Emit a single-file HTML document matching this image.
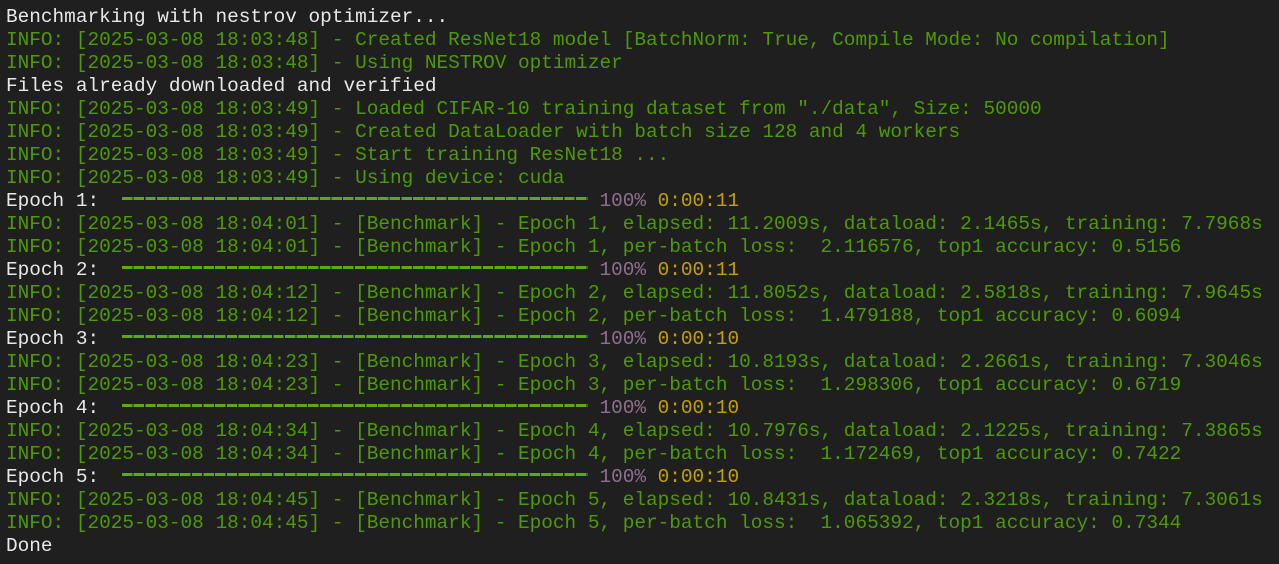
<html><head><style>
body{margin:0;background:#1f1f1f;width:1279px;height:564px;overflow:hidden}
pre{margin:0;padding:6px 0 0 6px;font-family:"Liberation Mono",monospace;font-size:19.4px;line-height:23px;color:#e8e8e8;white-space:pre}
.g{color:#4e9a06}
.b{display:inline-block;width:40ch;height:3px;background:repeating-linear-gradient(90deg,#5ea90f 0 10.4px,transparent 10.4px 11.64px);vertical-align:middle;position:relative;top:-2px}
.p{color:#8f6f8f}.t{color:#c4a000}
</style></head><body><pre>Benchmarking with nestrov optimizer...
<span class="g">INFO: [2025-03-08 18:03:48] - Created ResNet18 model [BatchNorm: True, Compile Mode: No compilation]</span>
<span class="g">INFO: [2025-03-08 18:03:48] - Using NESTROV optimizer</span>
Files already downloaded and verified
<span class="g">INFO: [2025-03-08 18:03:49] - Loaded CIFAR-10 training dataset from "./data", Size: 50000</span>
<span class="g">INFO: [2025-03-08 18:03:49] - Created DataLoader with batch size 128 and 4 workers</span>
<span class="g">INFO: [2025-03-08 18:03:49] - Start training ResNet18 ...</span>
<span class="g">INFO: [2025-03-08 18:03:49] - Using device: cuda</span>
Epoch 1:  <span class="b"></span> <span class="p">100%</span> <span class="t">0:00:11</span>
<span class="g">INFO: [2025-03-08 18:04:01] - [Benchmark] - Epoch 1, elapsed: 11.2009s, dataload: 2.1465s, training: 7.7968s</span>
<span class="g">INFO: [2025-03-08 18:04:01] - [Benchmark] - Epoch 1, per-batch loss:  2.116576, top1 accuracy: 0.5156</span>
Epoch 2:  <span class="b"></span> <span class="p">100%</span> <span class="t">0:00:11</span>
<span class="g">INFO: [2025-03-08 18:04:12] - [Benchmark] - Epoch 2, elapsed: 11.8052s, dataload: 2.5818s, training: 7.9645s</span>
<span class="g">INFO: [2025-03-08 18:04:12] - [Benchmark] - Epoch 2, per-batch loss:  1.479188, top1 accuracy: 0.6094</span>
Epoch 3:  <span class="b"></span> <span class="p">100%</span> <span class="t">0:00:10</span>
<span class="g">INFO: [2025-03-08 18:04:23] - [Benchmark] - Epoch 3, elapsed: 10.8193s, dataload: 2.2661s, training: 7.3046s</span>
<span class="g">INFO: [2025-03-08 18:04:23] - [Benchmark] - Epoch 3, per-batch loss:  1.298306, top1 accuracy: 0.6719</span>
Epoch 4:  <span class="b"></span> <span class="p">100%</span> <span class="t">0:00:10</span>
<span class="g">INFO: [2025-03-08 18:04:34] - [Benchmark] - Epoch 4, elapsed: 10.7976s, dataload: 2.1225s, training: 7.3865s</span>
<span class="g">INFO: [2025-03-08 18:04:34] - [Benchmark] - Epoch 4, per-batch loss:  1.172469, top1 accuracy: 0.7422</span>
Epoch 5:  <span class="b"></span> <span class="p">100%</span> <span class="t">0:00:10</span>
<span class="g">INFO: [2025-03-08 18:04:45] - [Benchmark] - Epoch 5, elapsed: 10.8431s, dataload: 2.3218s, training: 7.3061s</span>
<span class="g">INFO: [2025-03-08 18:04:45] - [Benchmark] - Epoch 5, per-batch loss:  1.065392, top1 accuracy: 0.7344</span>
Done</pre></body></html>
